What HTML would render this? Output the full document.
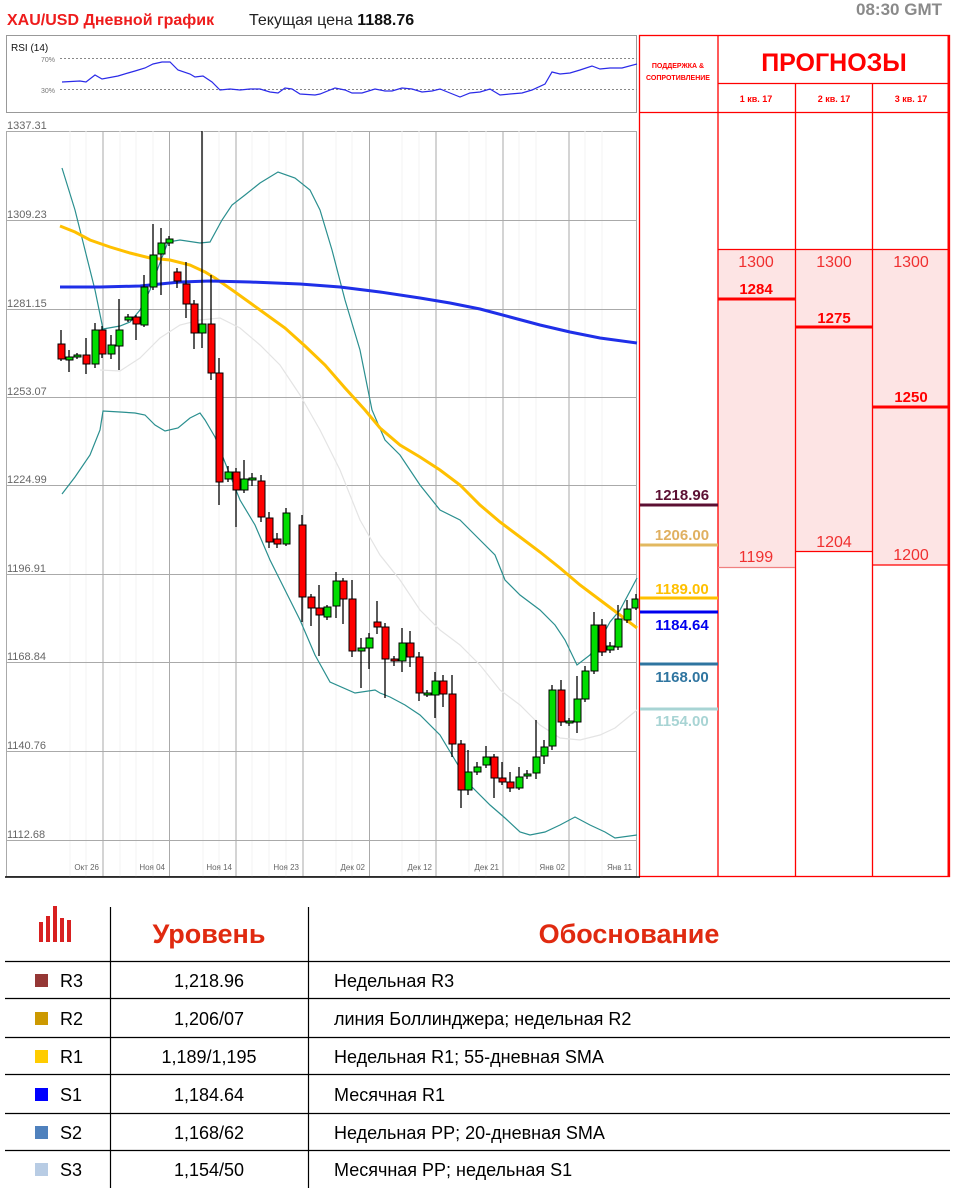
<!DOCTYPE html>
<html><head><meta charset="utf-8"><style>
html,body{margin:0;padding:0;background:#fff;}
svg{display:block;font-family:"Liberation Sans","DejaVu Sans",sans-serif;}
</style></head><body>
<svg width="960" height="1193" viewBox="0 0 960 1193" xmlns="http://www.w3.org/2000/svg">
<text x="7" y="25" font-size="16" font-weight="bold" fill="#ee1c1c">XAU/USD Дневной график</text>
<text x="249" y="25" font-size="16" fill="#222">Текущая цена <tspan font-weight="bold" fill="#111">1188.76</tspan></text>
<text x="942" y="15" font-size="17" font-weight="bold" fill="#8a8a8a" text-anchor="end">08:30 GMT</text>

<rect x="6.5" y="35.5" width="630" height="77" fill="#fff" stroke="#999"/>
<text x="11" y="51" font-size="10" fill="#111">RSI (14)</text>
<text x="55" y="62" font-size="7" fill="#777" text-anchor="end">70%</text>
<text x="55" y="93" font-size="7" fill="#777" text-anchor="end">30%</text>
<line x1="60" y1="58.5" x2="637" y2="58.5" stroke="#888" stroke-dasharray="2,2"/>
<line x1="60" y1="89.5" x2="637" y2="89.5" stroke="#888" stroke-dasharray="2,2"/>
<polyline fill="none" stroke="#2a2ae8" stroke-width="1.2" points="62,82 80,81 86,82 95,75 102,79 118,76 128,73 135,71 145,68 153,64 162,62 170,62 178,70 190,74 195,77 203,76 212,82 220,90 230,89 240,90 250,89 260,89 270,92 278,93 285,88 292,89 300,94 315,95 320,94 335,88 345,90 352,93 362,93 375,89 385,91 392,91 402,88 412,89 422,92 432,91 440,89 450,93 460,97 470,93 480,92 490,89 500,95 510,94 522,93 532,90 545,84 552,72 560,74 570,73 580,70 592,66 600,69 610,68 622,68 637,64"/>

<rect x="6.5" y="131.5" width="630" height="745" fill="#fff" stroke="#aaa"/>
<g stroke="#f3f3f3" stroke-width="1">
<line x1="70" y1="131" x2="70" y2="877"/><line x1="86" y1="131" x2="86" y2="877"/><line x1="120" y1="131" x2="120" y2="877"/><line x1="136" y1="131" x2="136" y2="877"/><line x1="153" y1="131" x2="153" y2="877"/><line x1="203" y1="131" x2="203" y2="877"/><line x1="219" y1="131" x2="219" y2="877"/><line x1="252" y1="131" x2="252" y2="877"/><line x1="269" y1="131" x2="269" y2="877"/><line x1="286" y1="131" x2="286" y2="877"/><line x1="336" y1="131" x2="336" y2="877"/><line x1="352" y1="131" x2="352" y2="877"/><line x1="402" y1="131" x2="402" y2="877"/><line x1="419" y1="131" x2="419" y2="877"/><line x1="469" y1="131" x2="469" y2="877"/><line x1="486" y1="131" x2="486" y2="877"/><line x1="519" y1="131" x2="519" y2="877"/><line x1="536" y1="131" x2="536" y2="877"/><line x1="585" y1="131" x2="585" y2="877"/><line x1="602" y1="131" x2="602" y2="877"/>
</g>
<g stroke="#aaa" stroke-width="1">
<line x1="103" y1="131" x2="103" y2="877"/><line x1="169.5" y1="131" x2="169.5" y2="877"/><line x1="236" y1="131" x2="236" y2="877"/><line x1="303" y1="131" x2="303" y2="877"/><line x1="369.5" y1="131" x2="369.5" y2="877"/><line x1="436" y1="131" x2="436" y2="877"/><line x1="503" y1="131" x2="503" y2="877"/><line x1="569" y1="131" x2="569" y2="877"/>
<line x1="6" y1="220.5" x2="637" y2="220.5"/><line x1="6" y1="309.5" x2="637" y2="309.5"/><line x1="6" y1="397.5" x2="637" y2="397.5"/><line x1="6" y1="485.5" x2="637" y2="485.5"/><line x1="6" y1="574.5" x2="637" y2="574.5"/><line x1="6" y1="662.5" x2="637" y2="662.5"/><line x1="6" y1="751.5" x2="637" y2="751.5"/><line x1="6" y1="840.5" x2="637" y2="840.5"/>
</g>
<rect x="0" y="116" width="60" height="14" fill="#fff"/>
<g font-size="11" fill="#666">
<text x="7" y="129">1337.31</text><text x="7" y="218">1309.23</text><text x="7" y="307">1281.15</text><text x="7" y="395">1253.07</text><text x="7" y="483">1224.99</text><text x="7" y="572">1196.91</text><text x="7" y="660">1168.84</text><text x="7" y="749">1140.76</text><text x="7" y="838">1112.68</text>
</g>
<g font-size="8" fill="#666" text-anchor="end">
<text x="99" y="870">Окт 26</text><text x="165" y="870">Ноя 04</text><text x="232" y="870">Ноя 14</text><text x="299" y="870">Ноя 23</text><text x="365" y="870">Дек 02</text><text x="432" y="870">Дек 12</text><text x="499" y="870">Дек 21</text><text x="565" y="870">Янв 02</text><text x="632" y="870">Янв 11</text>
</g>

<polyline fill="none" stroke="#e4e4e4" stroke-width="1.2" points="100,370 120,371 140,358 160,338 180,325 200,320 220,318 240,328 260,345 280,365 300,395 320,430 340,470 360,520 380,555 400,580 420,610 440,630 460,645 480,665 500,690 520,705 540,725 560,738 580,740 600,735 615,728 637,710"/>
<polyline fill="none" stroke="#2a8f8f" stroke-width="1.2" points="62,168 75,210 85,250 95,290 103,329 120,326 130,322 140,310 150,290 158,268 168,242 180,240 200,243 210,242 222,220 232,205 245,195 260,183 278,172 295,178 310,190 320,210 332,250 345,300 360,350 372,410 385,440 400,455 420,485 440,510 460,520 475,535 495,555 505,580 520,595 540,610 555,625 565,640 577,665 590,655 600,640 610,622 620,610 637,578"/>
<polyline fill="none" stroke="#2a8f8f" stroke-width="1.2" points="62,494 75,477 90,455 100,430 103,411 120,412 135,413 145,415 155,425 165,431 178,428 190,418 200,413 205,420 215,437 228,470 240,500 255,525 270,560 285,590 300,620 315,655 330,682 355,693 375,690 380,693 390,697 405,705 420,715 440,735 455,760 470,785 490,805 505,818 520,832 530,835 545,832 560,825 575,817 590,825 605,832 615,838 637,835"/>
<polyline fill="none" stroke="#ffc000" stroke-width="3" points="60,226 75,232 90,240 110,247 130,253 150,258 170,260 190,265 205,272 215,278 235,292 260,310 285,328 305,346 325,365 345,388 365,410 380,428 400,445 420,457 440,470 460,485 480,505 500,522 520,537 540,552 560,568 580,585 600,600 620,615 637,628"/>
<polyline fill="none" stroke="#1f2fe8" stroke-width="3" points="60,287 100,287 140,286 180,282 210,281 250,282 300,284 340,287 380,292 420,298 450,303 480,309 510,317 540,325 570,332 600,338 637,343"/>

<g stroke="#000" stroke-width="1.3">
<line x1="61" y1="330" x2="61" y2="361"/><line x1="69" y1="350" x2="69" y2="372"/><line x1="77" y1="353" x2="77" y2="359"/><line x1="86" y1="338" x2="86" y2="374"/><line x1="95" y1="323" x2="95" y2="368"/><line x1="102" y1="326" x2="102" y2="358"/><line x1="111" y1="335" x2="111" y2="359"/><line x1="119" y1="299" x2="119" y2="370"/><line x1="128" y1="314" x2="128" y2="322"/><line x1="136" y1="315" x2="136" y2="340"/><line x1="144" y1="275" x2="144" y2="327"/><line x1="153" y1="224" x2="153" y2="290"/><line x1="161" y1="228" x2="161" y2="295"/><line x1="169" y1="236" x2="169" y2="246"/><line x1="177" y1="268" x2="177" y2="288"/><line x1="186" y1="262" x2="186" y2="318"/><line x1="194" y1="300" x2="194" y2="349"/><line x1="202" y1="131" x2="202" y2="348"/><line x1="211" y1="275" x2="211" y2="380"/><line x1="219" y1="358" x2="219" y2="505"/><line x1="228" y1="466" x2="228" y2="482"/><line x1="236" y1="468" x2="236" y2="527"/><line x1="244" y1="460" x2="244" y2="493"/><line x1="252" y1="473" x2="252" y2="486"/><line x1="261" y1="475" x2="261" y2="522"/><line x1="269" y1="512" x2="269" y2="548"/><line x1="277" y1="533" x2="277" y2="548"/><line x1="286" y1="508" x2="286" y2="546"/>
<line x1="302" y1="515" x2="302" y2="622"/><line x1="311" y1="594" x2="311" y2="626"/><line x1="319" y1="585" x2="319" y2="656"/><line x1="327" y1="605" x2="327" y2="620"/><line x1="336" y1="572" x2="336" y2="618"/><line x1="343" y1="578" x2="343" y2="624"/><line x1="352" y1="580" x2="352" y2="657"/><line x1="361" y1="638" x2="361" y2="688"/><line x1="369" y1="633" x2="369" y2="669"/><line x1="377" y1="601" x2="377" y2="634"/><line x1="385" y1="623" x2="385" y2="698"/><line x1="394" y1="656" x2="394" y2="666"/><line x1="402" y1="628" x2="402" y2="672"/><line x1="410" y1="631" x2="410" y2="667"/><line x1="419" y1="652" x2="419" y2="701"/><line x1="427" y1="690" x2="427" y2="697"/><line x1="435" y1="672" x2="435" y2="718"/><line x1="443" y1="675" x2="443" y2="707"/><line x1="452" y1="675" x2="452" y2="757"/><line x1="461" y1="740" x2="461" y2="808"/><line x1="468" y1="750" x2="468" y2="795"/><line x1="477" y1="762" x2="477" y2="775"/><line x1="486" y1="746" x2="486" y2="768"/><line x1="494" y1="754" x2="494" y2="798"/><line x1="502" y1="762" x2="502" y2="785"/><line x1="510" y1="772" x2="510" y2="792"/><line x1="519" y1="767" x2="519" y2="790"/><line x1="527" y1="770" x2="527" y2="779"/><line x1="536" y1="720" x2="536" y2="779"/><line x1="544" y1="740" x2="544" y2="764"/><line x1="552" y1="685" x2="552" y2="750"/><line x1="561" y1="680" x2="561" y2="726"/><line x1="569" y1="718" x2="569" y2="726"/><line x1="577" y1="676" x2="577" y2="733"/><line x1="585" y1="666" x2="585" y2="702"/><line x1="594" y1="612" x2="594" y2="674"/><line x1="602" y1="619" x2="602" y2="656"/><line x1="610" y1="642" x2="610" y2="653"/><line x1="618" y1="605" x2="618" y2="650"/><line x1="627" y1="600" x2="627" y2="623"/><line x1="636" y1="594" x2="636" y2="610"/>
</g>
<g stroke="#000" stroke-width="1">
<g fill="#f00">
<rect x="58" y="344" width="7" height="15"/><rect x="83" y="355" width="7" height="9"/><rect x="99" y="330" width="7" height="24"/><rect x="133" y="317" width="7" height="7"/><rect x="174" y="272" width="7" height="9"/><rect x="183" y="284" width="7" height="20"/><rect x="191" y="304" width="7" height="29"/><rect x="208" y="324" width="7" height="49"/><rect x="216" y="373" width="7" height="109"/><rect x="233" y="472" width="7" height="18"/><rect x="258" y="481" width="7" height="36"/><rect x="266" y="518" width="7" height="24"/><rect x="274" y="539" width="7" height="5"/>
<rect x="299" y="525" width="7" height="72"/><rect x="308" y="597" width="7" height="11"/><rect x="316" y="608" width="7" height="7"/><rect x="340" y="581" width="7" height="18"/><rect x="349" y="599" width="7" height="52"/><rect x="374" y="622" width="7" height="5"/><rect x="382" y="627" width="7" height="32"/><rect x="391" y="659" width="7" height="2"/><rect x="407" y="643" width="7" height="14"/><rect x="416" y="657" width="7" height="36"/><rect x="440" y="681" width="7" height="13"/><rect x="449" y="694" width="7" height="50"/><rect x="458" y="744" width="7" height="46"/><rect x="491" y="757" width="7" height="21"/><rect x="499" y="778" width="7" height="4"/><rect x="507" y="782" width="7" height="6"/><rect x="558" y="690" width="7" height="32"/><rect x="599" y="625" width="7" height="27"/>
</g>
<g fill="#0d0">
<rect x="66" y="357" width="7" height="3"/><rect x="74" y="355" width="7" height="2"/><rect x="92" y="330" width="7" height="34"/><rect x="108" y="345" width="7" height="9"/><rect x="116" y="330" width="7" height="16"/><rect x="125" y="317" width="7" height="3"/><rect x="141" y="287" width="7" height="38"/><rect x="150" y="255" width="7" height="32"/><rect x="158" y="243" width="7" height="11"/><rect x="166" y="239" width="7" height="4"/><rect x="199" y="324" width="7" height="9"/><rect x="225" y="472" width="7" height="7"/><rect x="241" y="479" width="7" height="11"/><rect x="249" y="478" width="7" height="2"/><rect x="283" y="513" width="7" height="31"/>
<rect x="324" y="607" width="7" height="10"/><rect x="333" y="581" width="7" height="25"/><rect x="358" y="648" width="7" height="3"/><rect x="366" y="638" width="7" height="10"/><rect x="399" y="643" width="7" height="18"/><rect x="424" y="693" width="7" height="2"/><rect x="432" y="681" width="7" height="14"/><rect x="465" y="772" width="7" height="18"/><rect x="474" y="767" width="7" height="5"/><rect x="483" y="757" width="7" height="8"/><rect x="516" y="777" width="7" height="11"/><rect x="524" y="774" width="7" height="2"/><rect x="533" y="757" width="7" height="16"/><rect x="541" y="747" width="7" height="9"/><rect x="549" y="690" width="7" height="56"/><rect x="566" y="721" width="7" height="2"/><rect x="574" y="699" width="7" height="23"/><rect x="582" y="671" width="7" height="28"/><rect x="591" y="625" width="7" height="46"/><rect x="607" y="646" width="7" height="4"/><rect x="615" y="619" width="7" height="28"/><rect x="624" y="609" width="7" height="11"/><rect x="632" y="599" width="6" height="9"/>
</g>
</g>

<rect x="718" y="249" width="77" height="318" fill="#fde4e4"/>
<rect x="795" y="249" width="77" height="302" fill="#fde4e4"/>
<rect x="872" y="249" width="77" height="316" fill="#fde4e4"/>
<g stroke="#f00" stroke-width="1.3" fill="none">
<rect x="639.5" y="35.5" width="310" height="841"/>
<line x1="718" y1="35" x2="718" y2="877"/><line x1="795.5" y1="83" x2="795.5" y2="877"/><line x1="872.5" y1="83" x2="872.5" y2="877"/>
<line x1="718" y1="83.5" x2="950" y2="83.5"/><line x1="639" y1="112.5" x2="950" y2="112.5"/>
<line x1="718" y1="249.5" x2="950" y2="249.5"/>
<line x1="718" y1="567.5" x2="795" y2="567.5" stroke="#f08080"/><line x1="795" y1="551.5" x2="872" y2="551.5"/><line x1="872" y1="565" x2="950" y2="565"/>
</g>
<line x1="948.5" y1="35" x2="948.5" y2="877" stroke="#f00" stroke-width="2"/>
<g stroke="#f00" stroke-width="3"><line x1="718" y1="299" x2="795" y2="299"/><line x1="795" y1="327" x2="872" y2="327"/><line x1="872" y1="407" x2="950" y2="407"/></g>
<g fill="#f00" text-anchor="middle">
<text x="678" y="68" font-size="7" font-weight="bold">ПОДДЕРЖКА &amp;</text>
<text x="678" y="80" font-size="7" font-weight="bold">СОПРОТИВЛЕНИЕ</text>
<text x="834" y="71" font-size="25" font-weight="bold">ПРОГНОЗЫ</text>
<text x="756" y="102" font-size="9" font-weight="bold">1 кв. 17</text>
<text x="834" y="102" font-size="9" font-weight="bold">2 кв. 17</text>
<text x="911" y="102" font-size="9" font-weight="bold">3 кв. 17</text>
</g>
<g fill="#f03030" text-anchor="middle" font-size="16">
<text x="756" y="267">1300</text><text x="834" y="267">1300</text><text x="911" y="267">1300</text>
<text x="756" y="562">1199</text><text x="834" y="547">1204</text><text x="911" y="560">1200</text>
</g>
<g fill="#f00" text-anchor="middle" font-size="15" font-weight="bold">
<text x="756" y="294">1284</text>
<text x="834" y="323">1275</text>
<text x="911" y="402">1250</text>
</g>
<g stroke-width="3">
<line x1="640" y1="505" x2="718" y2="505" stroke="#5c1033"/>
<line x1="640" y1="545" x2="718" y2="545" stroke="#e2b860"/>
<line x1="640" y1="598" x2="718" y2="598" stroke="#ffc000"/>
<line x1="640" y1="612" x2="718" y2="612" stroke="#0000ee"/>
<line x1="640" y1="664" x2="718" y2="664" stroke="#2f75a0"/>
<line x1="640" y1="709" x2="718" y2="709" stroke="#a8d4d4"/>
</g>
<g font-size="15" font-weight="bold" text-anchor="middle">
<text x="682" y="500" fill="#5c1033">1218.96</text>
<text x="682" y="540" fill="#e0b060">1206.00</text>
<text x="682" y="594" fill="#ffc000">1189.00</text>
<text x="682" y="630" fill="#0000ee">1184.64</text>
<text x="682" y="682" fill="#2f75a0">1168.00</text>
<text x="682" y="726" fill="#a8d4d4">1154.00</text>
</g>
<line x1="5" y1="877" x2="640" y2="877" stroke="#000" stroke-width="1.5"/>

<g fill="#d82020">
<rect x="39" y="922" width="4" height="20"/><rect x="46" y="916" width="4" height="26"/><rect x="53" y="906" width="4" height="36"/><rect x="60" y="918" width="4" height="24"/><rect x="67" y="920" width="4" height="22"/>
</g>
<g font-size="27" font-weight="bold" fill="#e02a10" text-anchor="middle">
<text x="209" y="943">Уровень</text>
<text x="629" y="943">Обоснование</text>
</g>
<g stroke="#000" stroke-width="1.2">
<line x1="110.5" y1="907" x2="110.5" y2="1188"/><line x1="308.5" y1="907" x2="308.5" y2="1188"/>
<line x1="5" y1="961.5" x2="950" y2="961.5"/><line x1="5" y1="998.5" x2="950" y2="998.5"/><line x1="5" y1="1037.5" x2="950" y2="1037.5"/><line x1="5" y1="1074.5" x2="950" y2="1074.5"/><line x1="5" y1="1113.5" x2="950" y2="1113.5"/><line x1="5" y1="1150.5" x2="950" y2="1150.5"/>
</g>
<rect x="35" y="974" width="13" height="13" fill="#953735"/>
<rect x="35" y="1012" width="13" height="13" fill="#cc9900"/>
<rect x="35" y="1050" width="13" height="13" fill="#ffcc00"/>
<rect x="35" y="1088" width="13" height="13" fill="#0000ff"/>
<rect x="35" y="1126" width="13" height="13" fill="#4f81bd"/>
<rect x="35" y="1163" width="13" height="13" fill="#b8cce4"/>
<g font-size="18" fill="#000">
<text x="60" y="987">R3</text><text x="60" y="1025">R2</text><text x="60" y="1063">R1</text><text x="60" y="1101">S1</text><text x="60" y="1139">S2</text><text x="60" y="1176">S3</text>
<g text-anchor="middle"><text x="209" y="987">1,218.96</text><text x="209" y="1025">1,206/07</text><text x="209" y="1063">1,189/1,195</text><text x="209" y="1101">1,184.64</text><text x="209" y="1139">1,168/62</text><text x="209" y="1176">1,154/50</text></g>
<text x="334" y="987">Недельная R3</text><text x="334" y="1025">линия Боллинджера; недельная R2</text><text x="334" y="1063">Недельная R1; 55-дневная SMA</text><text x="334" y="1101">Месячная R1</text><text x="334" y="1139">Недельная PP; 20-дневная SMA</text><text x="334" y="1176">Месячная PP; недельная S1</text>
</g>
</svg>
</body></html>
